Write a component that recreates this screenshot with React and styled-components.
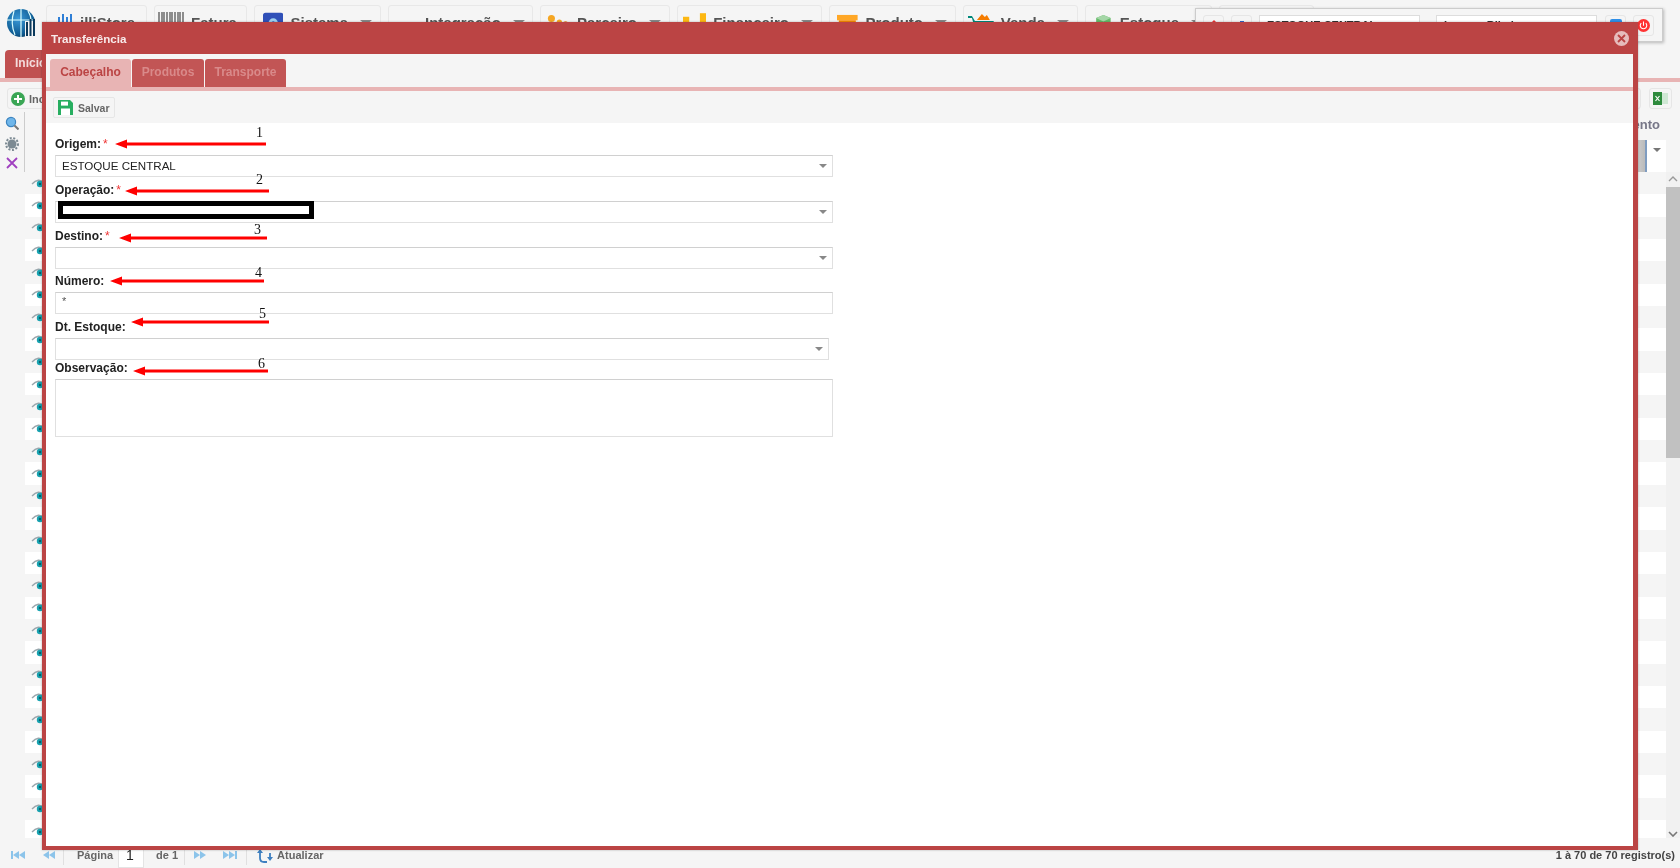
import React from 'react';
import styled, { createGlobalStyle } from 'styled-components';

const Global = createGlobalStyle`
  html, body { margin: 0; padding: 0; background: #f5f5f5; overflow: hidden; }
  * { box-sizing: border-box; }
`;

const Page = styled.div`
  position: relative;
  width: 1680px;
  height: 868px;
  overflow: hidden;
  background: #f5f5f5;
  display: flex;
  flex-direction: column;
  font-family: "Liberation Sans", Arial, sans-serif;
  filter: blur(0.45px);
`;

const TopBar = styled.header`
  height: 50px;
  flex: none;
  display: flex;
  align-items: flex-start;
  padding: 5px 0 0 7px;
`;
const LogoBox = styled.div`
  width: 30px;
  height: 30px;
  margin: 3px 9px 0 0;
  flex: none;
`;
const NavList = styled.nav`
  display: flex;
  gap: 7px;
`;
const NavButton = styled.div`
  width: ${p => p.$w}px;
  height: 36px;
  display: flex;
  align-items: flex-start;
  gap: 7px;
  padding: 5px 8px 0 ${p => p.$pl || 10}px;
  border: 1px solid #e8e8e8;
  border-radius: 3px;
  background: #f5f5f5;
  color: #555;
  font: 700 15px/24px "Liberation Sans", Arial, sans-serif;
  white-space: nowrap;
`;
const NavCaret = styled.span`
  width: 0;
  height: 0;
  margin: 9px 0 0 5px;
  border-left: 6px solid transparent;
  border-right: 6px solid transparent;
  border-top: 5px solid #888;
`;

const TabBar = styled.div`
  height: 32px;
  flex: none;
  padding-left: 2px;
  border-bottom: 4px solid #e8b4b4;
`;
const HomeTab = styled.div`
  width: 41px;
  height: 28px;
  margin-left: 3px;
  background: #c05050;
  border-radius: 4px 4px 0 0;
  color: #f4dcdc;
  padding-left: 10px;
  font: 700 12px/27px "Liberation Sans", Arial, sans-serif;
`;

const ActionBar = styled.div`
  height: 30px;
  flex: none;
  display: flex;
  align-items: flex-end;
  justify-content: space-between;
  padding: 0 8px 3px 7px;
`;
const ActionButton = styled.div`
  height: 21px;
  min-width: 21px;
  display: flex;
  align-items: center;
  justify-content: center;
  gap: 4px;
  padding: 0 3px;
  border: 1px solid #e6e6e6;
  border-radius: 3px;
  background: #f5f5f5;
  color: #666;
  font: 700 11px "Liberation Sans", Arial, sans-serif;
`;
const ActionGroup = styled.div`
  display: flex;
  gap: 8px;
`;

const GridArea = styled.div`
  flex: 1;
  min-height: 0;
  display: flex;
`;
const SideTools = styled.div`
  width: 22px;
  height: 60px;
  margin-left: 3px;
  flex: none;
  display: flex;
  flex-direction: column;
  align-items: center;
  justify-content: space-between;
  padding: 4px 3px 3px 0;
  border-right: 1px solid #ccc;
`;
const GridMain = styled.div`
  flex: 1;
  min-width: 0;
  display: flex;
  flex-direction: column;
`;
const GridHead = styled.div`
  height: 60px;
  flex: none;
  display: flex;
  flex-direction: column;
  align-items: flex-end;
`;
const HeadTitle = styled.div`
  width: 28px;
  height: 28px;
  color: #778;
  font: 700 13px/26px "Liberation Sans", Arial, sans-serif;
  overflow: hidden;
  direction: rtl;
  margin-right: 6px;
`;
const HeadFilterRow = styled.div`
  display: flex;
  height: 32px;
`;
const HeadCell = styled.div`
  width: 10px;
  background: linear-gradient(90deg, #ccc, #bbb);
  border-right: 2px solid #7f9cc0;
`;
const HeadFilter = styled.div`
  width: 19px;
  background: #fff;
  display: flex;
  justify-content: center;
  padding-top: 8px;
  &::before {
    content: "";
    width: 0;
    height: 0;
    border-left: 4px solid transparent;
    border-right: 4px solid transparent;
    border-top: 4px solid #777;
  }
`;
const RowList = styled.div`
  flex: 1;
  min-height: 0;
  overflow: hidden;
`;
const Row = styled.div`
  height: 22.35px;
  display: flex;
  align-items: center;
  padding-left: 6px;
  background: ${p => (p.$odd ? '#f5f5f5' : '#fff')};
`;
const Scroller = styled.div`
  width: 14px;
  flex: none;
  margin: 60px 0 28px;
  background: #f1f1f1;
  display: flex;
  flex-direction: column;
  align-items: center;
  justify-content: space-between;
  position: relative;
  padding: 4px 0 3px;
`;
const ScrollThumb = styled.div`
  position: absolute;
  top: 15px;
  left: 0;
  width: 14px;
  height: 271px;
  background: #c1c1c1;
`;

const Pager = styled.footer`
  position: absolute;
  left: 3px;
  right: 0;
  bottom: 0;
  height: 30px;
  background: #f5f5f5;
  display: flex;
  align-items: center;
  color: #666;
  font: 700 11px "Liberation Sans", Arial, sans-serif;
  padding: 4px 5px 0 0;
`;
const PagerIcon = styled.span`
  width: ${p => p.$w || 30}px;
  display: flex;
  justify-content: center;
  flex: none;
`;
const PagerSep = styled.span`
  width: 1px;
  height: 20px;
  background: #e0e0e0;
  margin: 0 ${p => p.$gap}px 0 ${p => p.$left}px;
  flex: none;
`;
const PagerInput = styled.span`
  width: 26px;
  height: 26px;
  margin: 0 12px 0 5px;
  background: #fff;
  border: 1px solid #e4e4e4;
  padding-left: 7px;
  color: #222;
  font: 400 14px/24px "Liberation Sans", Arial, sans-serif;
`;
const RefreshIcon = styled.svg`
  flex: none;
  margin-right: 4px;
`;
const PagerTotal = styled.span`
  margin-left: auto;
  color: #444;
`;

const FloatPanel = styled.div`
  position: absolute;
  left: 1195px;
  top: 8px;
  width: 468px;
  height: 34px;
  background: #f5f5f5;
  border: 1px solid #ccc;
  box-shadow: 1px 1px 3px rgba(0, 0, 0, .25);
  display: flex;
  align-items: flex-start;
  gap: 7px;
  padding: 6px 7px 0 7px;
`;
const PanelButton = styled.div`
  width: 21px;
  height: 21px;
  flex: none;
  display: flex;
  align-items: center;
  justify-content: center;
  background: #f5f5f5;
  border: 1px solid #e6e6e6;
  border-radius: 3px;
`;
const PanelInput = styled.div`
  width: 161px;
  height: 21px;
  margin: 0 ${p => p.$mr || 0}px 0 0;
  flex: none;
  background: #fff;
  border: 1px solid #ddd;
  padding-left: 7px;
  color: #333;
  font: 700 11px/19px "Liberation Sans", Arial, sans-serif;
  white-space: nowrap;
  overflow: hidden;
`;

const Modal = styled.section`
  position: absolute;
  left: 42px;
  top: 22px;
  width: 1596px;
  height: 828px;
  background: #fff;
  border: 4px solid #bb4444;
  border-top: 0;
  border-right-width: 5px;
  box-shadow: 0 0 2px rgba(0, 0, 0, .3);
  display: flex;
  flex-direction: column;
`;
const ModalHead = styled.div`
  height: 32px;
  flex: none;
  margin: 0 -5px 0 -4px;
  padding: 0 9px;
  background: #bb4444;
  display: flex;
  align-items: center;
  justify-content: space-between;
  color: #f8eaea;
  font: 700 11.6px "Liberation Sans", Arial, sans-serif;
`;
const CloseDot = styled.span`
  width: 15px;
  height: 15px;
  border-radius: 50%;
  background: #e6bcbc;
  display: flex;
  align-items: center;
  justify-content: center;
`;
const ModalTabs = styled.div`
  height: 37px;
  flex: none;
  background: #f5f5f5;
  border-bottom: 4px solid #e8b4b4;
  display: flex;
  align-items: flex-end;
  gap: 1px;
  padding-left: 4px;
`;
const ModalTab = styled.div`
  width: ${p => p.$w}px;
  height: 28px;
  text-align: center;
  border-radius: 3px 3px 0 0;
  background: ${p => (p.$active ? '#e8b4b4' : '#c25555')};
  color: ${p => (p.$active ? '#bb4444' : '#d98a8a')};
  font: 700 12px/27px "Liberation Sans", Arial, sans-serif;
`;
const ModalTools = styled.div`
  height: 32px;
  flex: none;
  background: #f5f5f5;
  padding: 6px 0 0 7px;
`;
const SaveButton = styled.div`
  width: 62px;
  height: 21px;
  display: flex;
  align-items: center;
  gap: 5px;
  padding-left: 4px;
  border: 1px solid #e6e6e6;
  border-radius: 2px;
  color: #666;
  font: 700 10.5px "Liberation Sans", Arial, sans-serif;
`;
const Form = styled.div`
  flex: 1;
  padding: 11px 0 0 9px;
  display: flex;
  flex-direction: column;
`;
const Field = styled.div`
  position: relative;
  width: ${p => p.$w || 778}px;
  height: ${p => p.$h}px;
  flex: none;
`;
const Label = styled.div`
  height: 21px;
  color: #222;
  font: 700 12px/21px "Liberation Sans", Arial, sans-serif;
`;
const Required = styled.span`
  color: #e33;
  font-weight: 400;
  margin-left: 2px;
`;
const Control = styled.div`
  position: relative;
  height: ${p => p.$h || 22}px;
  background: #fff;
  border: 1px solid #e0e0e0;
  border-top-color: #d0d0d0;
  padding-left: 6px;
  color: ${p => (p.$dim ? '#555' : '#222')};
  font: 400 ${p => (p.$dim ? 11 : 11.6)}px/${p => (p.$dim ? 17 : 20)}px "Liberation Sans", Arial, sans-serif;
`;
const Caret = styled.span`
  position: absolute;
  right: 5px;
  top: 8px;
  width: 0;
  height: 0;
  border-left: 4px solid transparent;
  border-right: 4px solid transparent;
  border-top: 4px solid #888;
`;
const Redaction = styled.div`
  position: absolute;
  left: 2px;
  top: -1px;
  width: 256px;
  height: 18px;
  background: #fff;
  border: 5px solid #000;
`;
const Note = styled.div`
  position: absolute;
  left: ${p => p.$left}px;
  top: ${p => p.$top}px;
  width: ${p => p.$width}px;
  height: 10px;
  pointer-events: none;
`;
const NoteNumber = styled.span`
  position: absolute;
  right: ${p => p.$right}px;
  top: ${p => p.$y}px;
  color: #111;
  font: 400 14px/14px "Liberation Serif", serif;
`;
const NoteLine = styled.svg`
  display: block;
  width: 100%;
  height: 10px;
`;

const Annotation = ({ n, left, top, width, right, y }) => (
  <Note $left={left} $top={top} $width={width}>
    <NoteNumber $right={right} $y={y}>{n}</NoteNumber>
    <NoteLine viewBox={`0 0 ${width} 10`}>
      <path d={`M0 5 L12 0.5 L12 3.5 L${width} 3.5 L${width} 6.5 L12 6.5 L12 9.5 Z`} fill="#f00" />
    </NoteLine>
  </Note>
);

const Logo = () => (
  <svg viewBox="0 0 30 30" width="30" height="30">
    <defs>
      <radialGradient id="g" cx=".4" cy=".35" r=".8">
        <stop offset="0" stopColor="#3a9ad9" />
        <stop offset=".7" stopColor="#0e5b92" />
        <stop offset="1" stopColor="#06263f" />
      </radialGradient>
    </defs>
    <circle cx="14" cy="15" r="14" fill="url(#g)" />
    <path d="M14 1v28M0 12h28M7 3q-4 12 1 24M21 3q3 5 3 9" stroke="#dff" strokeWidth="1.2" fill="none" />
    <path d="M18 13h12v17H18z" fill="#f5f5f5" />
    <path d="M20 14v14M23.5 11v17M27 11v17" stroke="#0b3a5c" strokeWidth="2" />
  </svg>
);
const BarsIcon = () => (
  <svg width="26" height="24" viewBox="0 0 26 24"><path d="M1 1v20M4 1v20M6 1v20M9 1v20M12 1v20M14 1v20M17 1v20M20 1v20M22 1v20M25 1v20" stroke="#555" strokeWidth="1.3" /></svg>
);
const StoreIcon = () => (
  <svg width="16" height="24" viewBox="0 0 16 24"><path d="M2 6v12M6 3v15M10 6v12M14 3v15" stroke="#2f7fd6" strokeWidth="2" /></svg>
);
const SquareGear = () => (
  <svg width="24" height="24" viewBox="0 0 24 24"><rect width="24" height="24" rx="3" fill="#2f50b8" /><circle cx="12" cy="12" r="5.5" fill="#9fd0ee" /><circle cx="12" cy="12" r="2" fill="#2f50b8" /></svg>
);
const Partner = () => (
  <svg width="26" height="24" viewBox="0 0 26 24"><circle cx="5" cy="7" r="4" fill="#f5a623" /><circle cx="14" cy="11" r="3" fill="#f5a623" /><circle cx="21" cy="13" r="3" fill="#e8871e" /></svg>
);
const Finance = () => (
  <svg width="26" height="24" viewBox="0 0 26 24"><rect x="0" y="5" width="7" height="19" fill="#fdb813" /><rect x="10" y="12" width="7" height="12" fill="#fdb813" /><rect x="19" y="1" width="7" height="23" fill="#fdb813" /></svg>
);
const Box = () => (
  <svg width="24" height="24" viewBox="0 0 24 24"><rect x="0" y="3" width="23" height="6" fill="#ffa726" /><rect x="2" y="9" width="19" height="15" fill="#fb8c00" /></svg>
);
const Cart = () => (
  <svg width="26" height="24" viewBox="0 0 26 24"><path d="M9 9l5-6 3 3 2-2 3 5z" fill="#f57c00" /><path d="M0 5h4l3 5h19l-3 12H8L4 7H0z" fill="#00897b" /></svg>
);
const Cube = () => (
  <svg width="26" height="24" viewBox="0 0 26 24"><path d="M13 1l10 4v14l-10 5-10-5V5z" fill="#66bb6a" /><path d="M13 1l10 4-10 5L3 5z" fill="#a5d6a7" /></svg>
);

const navItems = [
  { label: 'illiStore', w: 101, icon: <StoreIcon />, pl: 10 },
  { label: 'Fatura', w: 93, icon: <BarsIcon />, pl: 3 },
  { label: 'Sistema', w: 127, icon: <SquareGear />, caret: true, pl: 8 },
  { label: 'Integração', w: 145, caret: true, pl: 36 },
  { label: 'Parceiro', w: 130, icon: <Partner />, caret: true, pl: 6 },
  { label: 'Financeiro', w: 145, icon: <Finance />, caret: true, pl: 5 },
  { label: 'Produto', w: 127, icon: <Box />, caret: true, pl: 7 },
  { label: 'Venda', w: 115, icon: <Cart />, caret: true, pl: 4 },
  { label: 'Estoque', w: 127, icon: <Cube />, caret: true, pl: 8 },
  { label: '', w: 95 },
];

const Eye = () => (
  <svg width="15" height="11" viewBox="0 0 15 11">
    <path d="M1 6q6-7 13-1" stroke="#9aa7ad" strokeWidth="1.3" fill="none" />
    <circle cx="9" cy="6" r="3.2" fill="#17a2b0" />
    <circle cx="9" cy="6" r="1.2" fill="#0b5e69" />
  </svg>
);

const Tri = ({ dir = 1, bar, color = '#8cc4ea' }) => (
  <svg width="15" height="10" viewBox="0 0 15 10">
    <g fill={color} transform={dir < 0 ? 'translate(15 0) scale(-1 1)' : undefined}>
      <path d="M1 1l6 4-6 4zM7 1l6 4-6 4z" />
      {bar && <rect x="13" y="1" width="2" height="8" />}
    </g>
  </svg>
);

const rows = Array.from({ length: 31 }, (_, i) => i);

const fields = [
  { label: 'Origem:', req: true, value: 'ESTOQUE CENTRAL', caret: true, h: 46, note: { n: 1, left: 60, top: 5, width: 151, right: 3, y: -13 } },
  { label: 'Operação:', req: true, redact: true, caret: true, h: 46, note: { n: 2, left: 70, top: 5.7, width: 144, right: 6, y: -13 } },
  { label: 'Destino:', req: true, caret: true, h: 45, note: { n: 3, left: 63.5, top: 7, width: 148.5, right: 6, y: -10 } },
  { label: 'Número:', value: '*', dim: true, h: 46, note: { n: 4, left: 55, top: 4.7, width: 154, right: 2, y: -10 } },
  { label: 'Dt. Estoque:', caret: true, h: 41, w: 774, note: { n: 5, left: 76, top: -0.3, width: 138, right: 3, y: -10 } },
  { label: 'Observação:', h: 60, ch: 58, note: { n: 6, left: 78, top: 8, width: 135, right: 3, y: -9 } },
];

export default function App() {
  return (
    <>
      <Global />
      <Page>
        <TopBar>
          <LogoBox><Logo /></LogoBox>
          <NavList>
            {navItems.map((item, i) => (
              <NavButton key={i} $w={item.w} $pl={item.pl}>
                {item.icon}
                {item.label}
                {item.caret && <NavCaret />}
              </NavButton>
            ))}
          </NavList>
        </TopBar>

        <TabBar><HomeTab>Início</HomeTab></TabBar>

        <ActionBar>
          <ActionButton>
            <svg width="14" height="14" viewBox="0 0 14 14"><circle cx="7" cy="7" r="7" fill="#3aa655" /><path d="M7 3v8M3 7h8" stroke="#fff" strokeWidth="2" /></svg>
            Incluir
          </ActionButton>
          <ActionGroup>
            <ActionButton>
              <svg width="14" height="14" viewBox="0 0 14 14"><circle cx="7" cy="7" r="5" fill="#999" /></svg>
            </ActionButton>
            <ActionButton>
              <svg width="15" height="15" viewBox="0 0 15 15"><rect x="5" y="2" width="10" height="11" fill="#cfe8d4" /><rect x="0" y="1" width="9" height="13" fill="#2e8b3d" /><path d="M2.5 5l4 5M6.5 5l-4 5" stroke="#fff" strokeWidth="1.2" /></svg>
            </ActionButton>
          </ActionGroup>
        </ActionBar>

        <GridArea>
          <SideTools>
            <svg width="14" height="14" viewBox="0 0 14 14"><circle cx="6" cy="6" r="4.6" fill="#6fb6ea" stroke="#3d85c0" strokeWidth="1.2" /><path d="M9.5 9.5L13.5 13.5" stroke="#777" strokeWidth="2" /></svg>
            <svg width="14" height="14" viewBox="0 0 14 14"><circle cx="7" cy="7" r="4.5" fill="#7c8a93" /><circle cx="7" cy="7" r="6" fill="none" stroke="#7c8a93" strokeWidth="2" strokeDasharray="2 1.6" /></svg>
            <svg width="12" height="12" viewBox="0 0 12 12"><path d="M1 1l10 10M11 1L1 11" stroke="#a040c0" strokeWidth="1.8" /></svg>
          </SideTools>
          <GridMain>
            <GridHead>
              <HeadTitle>ento</HeadTitle>
              <HeadFilterRow>
                <HeadCell />
                <HeadFilter />
              </HeadFilterRow>
            </GridHead>
            <RowList>
              {rows.map(i => (
                <Row key={i} $odd={i % 2 === 0}><Eye /></Row>
              ))}
            </RowList>
          </GridMain>
          <Scroller>
            <svg width="10" height="6" viewBox="0 0 10 6"><path d="M1 5l4-4 4 4" stroke="#999" strokeWidth="1.4" fill="none" /></svg>
            <ScrollThumb />
            <svg width="10" height="6" viewBox="0 0 10 6"><path d="M1 1l4 4 4-4" stroke="#777" strokeWidth="1.6" fill="none" /></svg>
          </Scroller>
        </GridArea>

        <Pager>
          <PagerIcon><Tri dir={-1} bar /></PagerIcon>
          <PagerIcon><Tri dir={-1} /></PagerIcon>
          <PagerSep $left={0} $gap={13} />
          Página
          <PagerInput>1</PagerInput>
          de 1
          <PagerSep $left={6} $gap={0} />
          <PagerIcon><Tri /></PagerIcon>
          <PagerIcon $w={29}><Tri bar /></PagerIcon>
          <PagerSep $left={2} $gap={10} />
          <RefreshIcon width="16" height="15" viewBox="0 0 16 15">
            <path d="M3 4v6q0 4 4 4h3M13 11V5" stroke="#3d7fc0" strokeWidth="1.8" fill="none" />
            <path d="M0 5h6L3 1zM10 9h6l-3 4z" fill="#3d7fc0" />
          </RefreshIcon>
          Atualizar
          <PagerTotal>1 à 70 de 70 registro(s)</PagerTotal>
        </Pager>

        <FloatPanel>
          <PanelButton>
            <svg width="12" height="12" viewBox="0 0 12 12"><path d="M6 0l6 6-6 6-6-6z" fill="#e33" /></svg>
          </PanelButton>
          <PanelButton>
            <svg width="12" height="12" viewBox="0 0 12 12"><rect x="4" y="1" width="4" height="10" fill="#36c" /></svg>
          </PanelButton>
          <PanelInput $mr={9}>ESTOQUE CENTRAL</PanelInput>
          <PanelInput $mr={1}>Larcom Ribeiro</PanelInput>
          <PanelButton>
            <svg width="12" height="14" viewBox="0 0 12 14"><rect width="12" height="14" rx="2" fill="#2f8fe8" /></svg>
          </PanelButton>
          <PanelButton>
            <svg width="13" height="13" viewBox="0 0 16 16">
              <circle cx="8" cy="8" r="8" fill="#f33" />
              <path d="M5.2 5.2a4 4 0 1 0 5.6 0M8 3.2v5" stroke="#fff" strokeWidth="1.3" fill="none" />
            </svg>
          </PanelButton>
        </FloatPanel>

        <Modal>
          <ModalHead>
            Transferência
            <CloseDot>
              <svg width="9" height="9" viewBox="0 0 9 9"><path d="M1 1l7 7M8 1L1 8" stroke="#bb4444" strokeWidth="1.8" /></svg>
            </CloseDot>
          </ModalHead>
          <ModalTabs>
            <ModalTab $w={81} $active>Cabeçalho</ModalTab>
            <ModalTab $w={72}>Produtos</ModalTab>
            <ModalTab $w={81}>Transporte</ModalTab>
          </ModalTabs>
          <ModalTools>
            <SaveButton>
              <svg width="15" height="15" viewBox="0 0 15 15">
                <path d="M0 0h12l3 3v12H0z" fill="#27ae60" />
                <rect x="3" y="1.6" width="7" height="4" fill="#fff" />
                <rect x="3" y="8.5" width="9" height="6.5" fill="#fff" />
              </svg>
              Salvar
            </SaveButton>
          </ModalTools>
          <Form>
            {fields.map(f => (
              <Field key={f.label} $h={f.h} $w={f.w}>
                <Label>
                  {f.label}
                  {f.req && <Required>*</Required>}
                </Label>
                <Control $h={f.ch} $dim={f.dim}>
                  {f.value}
                  {f.redact && <Redaction />}
                  {f.caret && <Caret />}
                </Control>
                <Annotation {...f.note} />
              </Field>
            ))}
          </Form>
        </Modal>
      </Page>
    </>
  );
}
